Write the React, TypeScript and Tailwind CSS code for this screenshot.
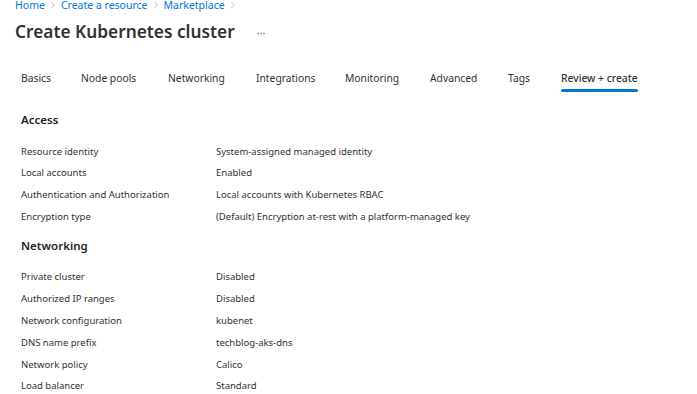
import React from "react";
import { ChevronRight } from "lucide-react";

const tabs = ["Basics", "Node pools", "Networking", "Integrations", "Monitoring", "Advanced", "Tags", "Review + create"];

const access = [
  ["Resource identity", "System-assigned managed identity"],
  ["Local accounts", "Enabled"],
  ["Authentication and Authorization", "Local accounts with Kubernetes RBAC"],
  ["Encryption type", "(Default) Encryption at-rest with a platform-managed key"],
];

const networking = [
  ["Private cluster", "Disabled"],
  ["Authorized IP ranges", "Disabled"],
  ["Network configuration", "kubenet"],
  ["DNS name prefix", "techblog-aks-dns"],
  ["Network policy", "Calico"],
  ["Load balancer", "Standard"],
];

function Section({ title, rows }: { title: string; rows: string[][] }) {
  return (
    <div className="pl-[21px]">
      <h2 className="text-[11.5px] font-semibold text-[#201f1e] leading-[16px]">{title}</h2>
      <div className="mt-[15.5px] flex flex-col gap-[5.8px]">
        {rows.map(([k, v]) => (
          <div key={k} className="flex text-[9.5px] leading-[16px] text-[#323130]">
            <div className="w-[195px] shrink-0">{k}</div>
            <div>{v}</div>
          </div>
        ))}
      </div>
    </div>
  );
}

export default function App() {
  return (
    <div className="w-[697px] h-[394px] overflow-hidden bg-white" style={{ fontFamily: '"Noto Sans", "Open Sans", sans-serif' }}>
      {/* Breadcrumb */}
      <div className="-mt-[3px] pl-[15px] flex items-center gap-[3px] text-[10.5px] leading-[16px] text-[#0078d4]">
        <span>Home</span>
        <ChevronRight size={10} strokeWidth={1.3} className="text-[#8a8886]" />
        <span>Create a resource</span>
        <ChevronRight size={10} strokeWidth={1.3} className="text-[#8a8886]" />
        <span>Marketplace</span>
        <ChevronRight size={10} strokeWidth={1.3} className="text-[#8a8886]" />
      </div>

      {/* Title */}
      <div className="mt-[7px] pl-[15px] flex items-center">
        <h1 className="text-[17.3px] font-semibold text-[#323130] leading-[24px]">Create Kubernetes cluster</h1>
        <span className="ml-[22px] text-[11px] text-[#605e5c] leading-none">···</span>
      </div>

      {/* Tabs */}
      <div className="mt-[20px] pl-[21px] flex">
        {tabs.map((t, i) => {
          const active = i === tabs.length - 1;
          const widths = ["w-[60px]", "w-[87px]", "w-[88px]", "w-[89px]", "w-[85px]", "w-[78px]", "w-[53px]", "w-auto"];
          return (
            <div key={t} className={`${widths[i]} shrink-0`}>
              <div className="inline-flex flex-col text-[10.3px] leading-[16px] text-[#323130]">
                <span className={active ? "font-medium" : ""}>{t}</span>
                <span className={`mt-[3px] h-[3px] rounded-sm ${active ? "bg-[#0078d4]" : "bg-transparent"}`} />
              </div>
            </div>
          );
        })}
      </div>

      <div className="mt-[20px] flex flex-col gap-[13px]">
        <Section title="Access" rows={access} />
        <Section title="Networking" rows={networking} />
      </div>
    </div>
  );
}
